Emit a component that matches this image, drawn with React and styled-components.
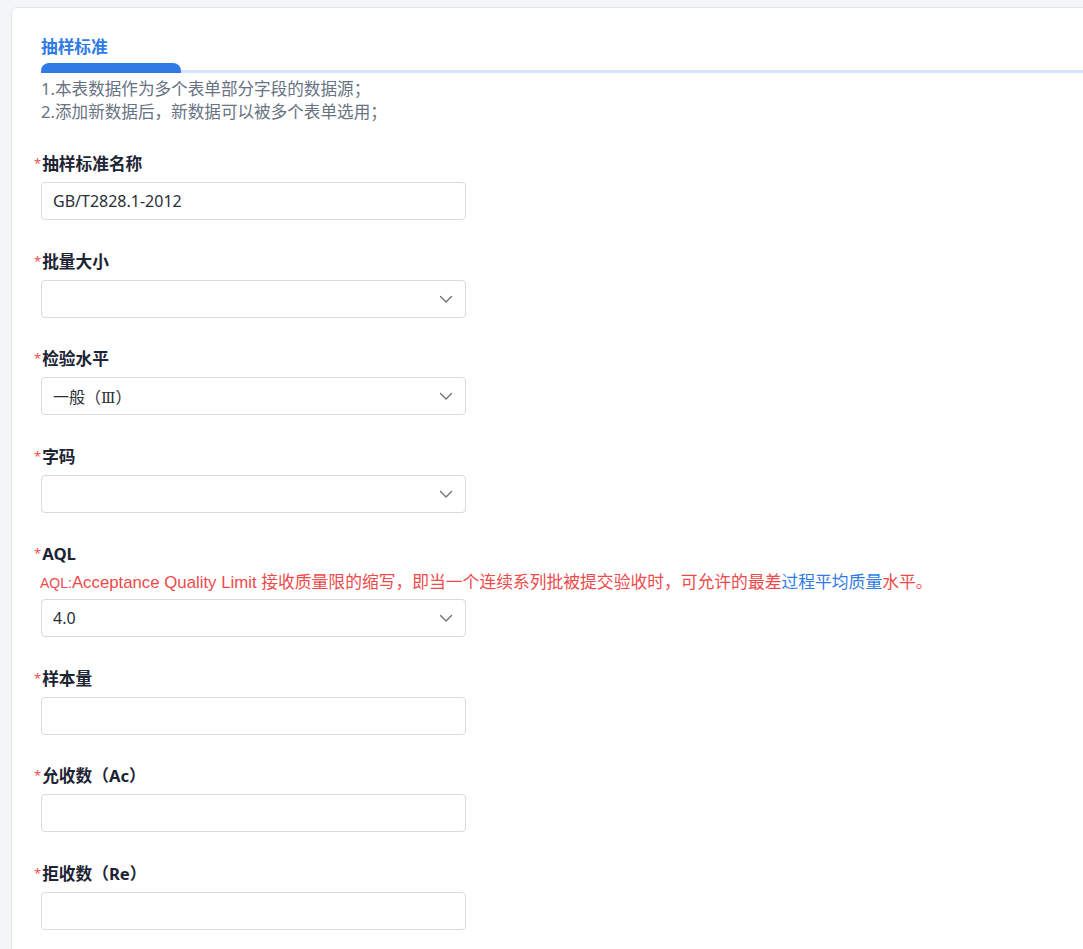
import React from 'react'
import styled, { createGlobalStyle } from 'styled-components'

const GlobalStyle = createGlobalStyle`
  html, body {
    margin: 0;
    padding: 0;
    background: #f4f5f7;
    font-family: "Noto Sans", "Noto Sans CJK SC", sans-serif;
    overflow: hidden;
  }
`

const fields = [
  { label: '抽样标准名称', kind: 'input', value: 'GB/T2828.1-2012' },
  { label: '批量大小', kind: 'select', value: '' },
  { label: '检验水平', kind: 'select', value: '一般（|Ⅲ|）', cjk: true },
  { label: '字码', kind: 'select', value: '' },
  { label: 'AQL', kind: 'select', value: '4.0', help: true },
  { label: '样本量', kind: 'input', value: '' },
  { label: '允收数（Ac）', kind: 'input', value: '' },
  { label: '拒收数（Re）', kind: 'input', value: '' },
]

// roman numerals between pipes get their own face
function renderValue (value) {
  return value.split('|').map((part, i) =>
    i % 2 ? <Numeral key={i}>{part}</Numeral> : part
  )
}

function Chevron () {
  return (
    <svg width="14" height="14" viewBox="0 0 14 14" fill="none">
      <path d="M1.5 4.5 L7 10 L12.5 4.5" stroke="#6b7280" strokeWidth="1.4" strokeLinecap="round" strokeLinejoin="round"/>
    </svg>
  )
}

function Field ({ field }) {
  return (
    <FieldWrap>
      <Label><Star>*</Star>{field.label}</Label>
      {field.help && (
        <Help>
          <small>AQL:</small>Acceptance Quality Limit 接收质量限的缩写，即当一个连续系列批被提交验收时，可允许的最差<HelpLink>过程平均质量</HelpLink>水平。
        </Help>
      )}
      <Box>
        <BoxText $cjk={field.cjk}>{renderValue(field.value)}</BoxText>
        {field.kind === 'select' && <Chevron/>}
      </Box>
    </FieldWrap>
  )
}

function App () {
  return (
    <>
      <GlobalStyle/>
      <Page>
        <Card>
          <TabTitle>抽样标准</TabTitle>
          <TabRail>
            <TabPill/>
            <TabLine/>
          </TabRail>
          <Notes>
            <div>1.本表数据作为多个表单部分字段的数据源；</div>
            <div>2.添加新数据后，新数据可以被多个表单选用；</div>
          </Notes>
          <Form>
            {fields.map(f => <Field key={f.label} field={f}/>)}
          </Form>
        </Card>
      </Page>
    </>
  )
}

export default App

const Page = styled.div`
width: 100%;
height: 949px;
padding: 7px 0 0 11px;
box-sizing: border-box;
overflow: hidden;
`
const Card = styled.div`
width: 1100px;
min-height: 960px;
background: #fff;
border: 1px solid #e3e5e9;
border-radius: 6px;
padding: 28px 0 0 29px;
box-sizing: border-box;
`
const TabTitle = styled.div`
font-size: 16.7px;
font-weight: 700;
line-height: 22px;
color: #2f7be6;
`
const TabRail = styled.div`
display: flex;
align-items: flex-end;
margin-top: 5px;
`
const TabPill = styled.div`
width: 140px;
height: 10px;
background: #2f7be6;
border-radius: 8px 8px 0 0;
`
const TabLine = styled.div`
flex: 1;
height: 3px;
background: #d5e4fb;
`
const Notes = styled.div`
margin-top: 4px;
font-size: 16.6px;
line-height: 23px;
color: #677283;
`
const Form = styled.div`
display: flex;
flex-direction: column;
gap: 30.5px;
margin-top: 30px;
`
const FieldWrap = styled.div`
display: flex;
flex-direction: column;
gap: 7px;
`
const Label = styled.div`
margin-left: -7px;
font-size: 16.7px;
font-weight: 700;
line-height: 22px;
height: 22px;
color: #1d2433;
`
const Star = styled.span`
color: #f05050;
font-weight: 400;
font-size: 13px;
line-height: 0;
margin-right: 1px;
vertical-align: 2px;
`
const Help = styled.div`
margin-left: -1px;
margin-bottom: -2px;
font-family: "Liberation Sans", "Noto Sans CJK SC", sans-serif;
font-size: 16.8px;
line-height: 22px;
height: 22px;
white-space: nowrap;
color: #ef4a4a;

small {
  font-size: 14px;
}
`
const HelpLink = styled.span`
color: #2f7be6;
`
const Box = styled.div`
width: 425px;
height: 38px;
box-sizing: border-box;
border: 1px solid #d8dadf;
border-radius: 4px;
display: flex;
align-items: center;
justify-content: space-between;
padding: 0 12px 0 11px;
`
const BoxText = styled.span`
font-family: ${({ $cjk }) => ($cjk ? '"Noto Sans CJK SC", sans-serif' : '"Noto Sans", "Noto Sans CJK SC", sans-serif')};
font-size: 16px;
color: #2b2f36;
`
const Numeral = styled.span`
font-family: "DejaVu Serif", "Liberation Serif", serif;
font-size: 15px;
`
